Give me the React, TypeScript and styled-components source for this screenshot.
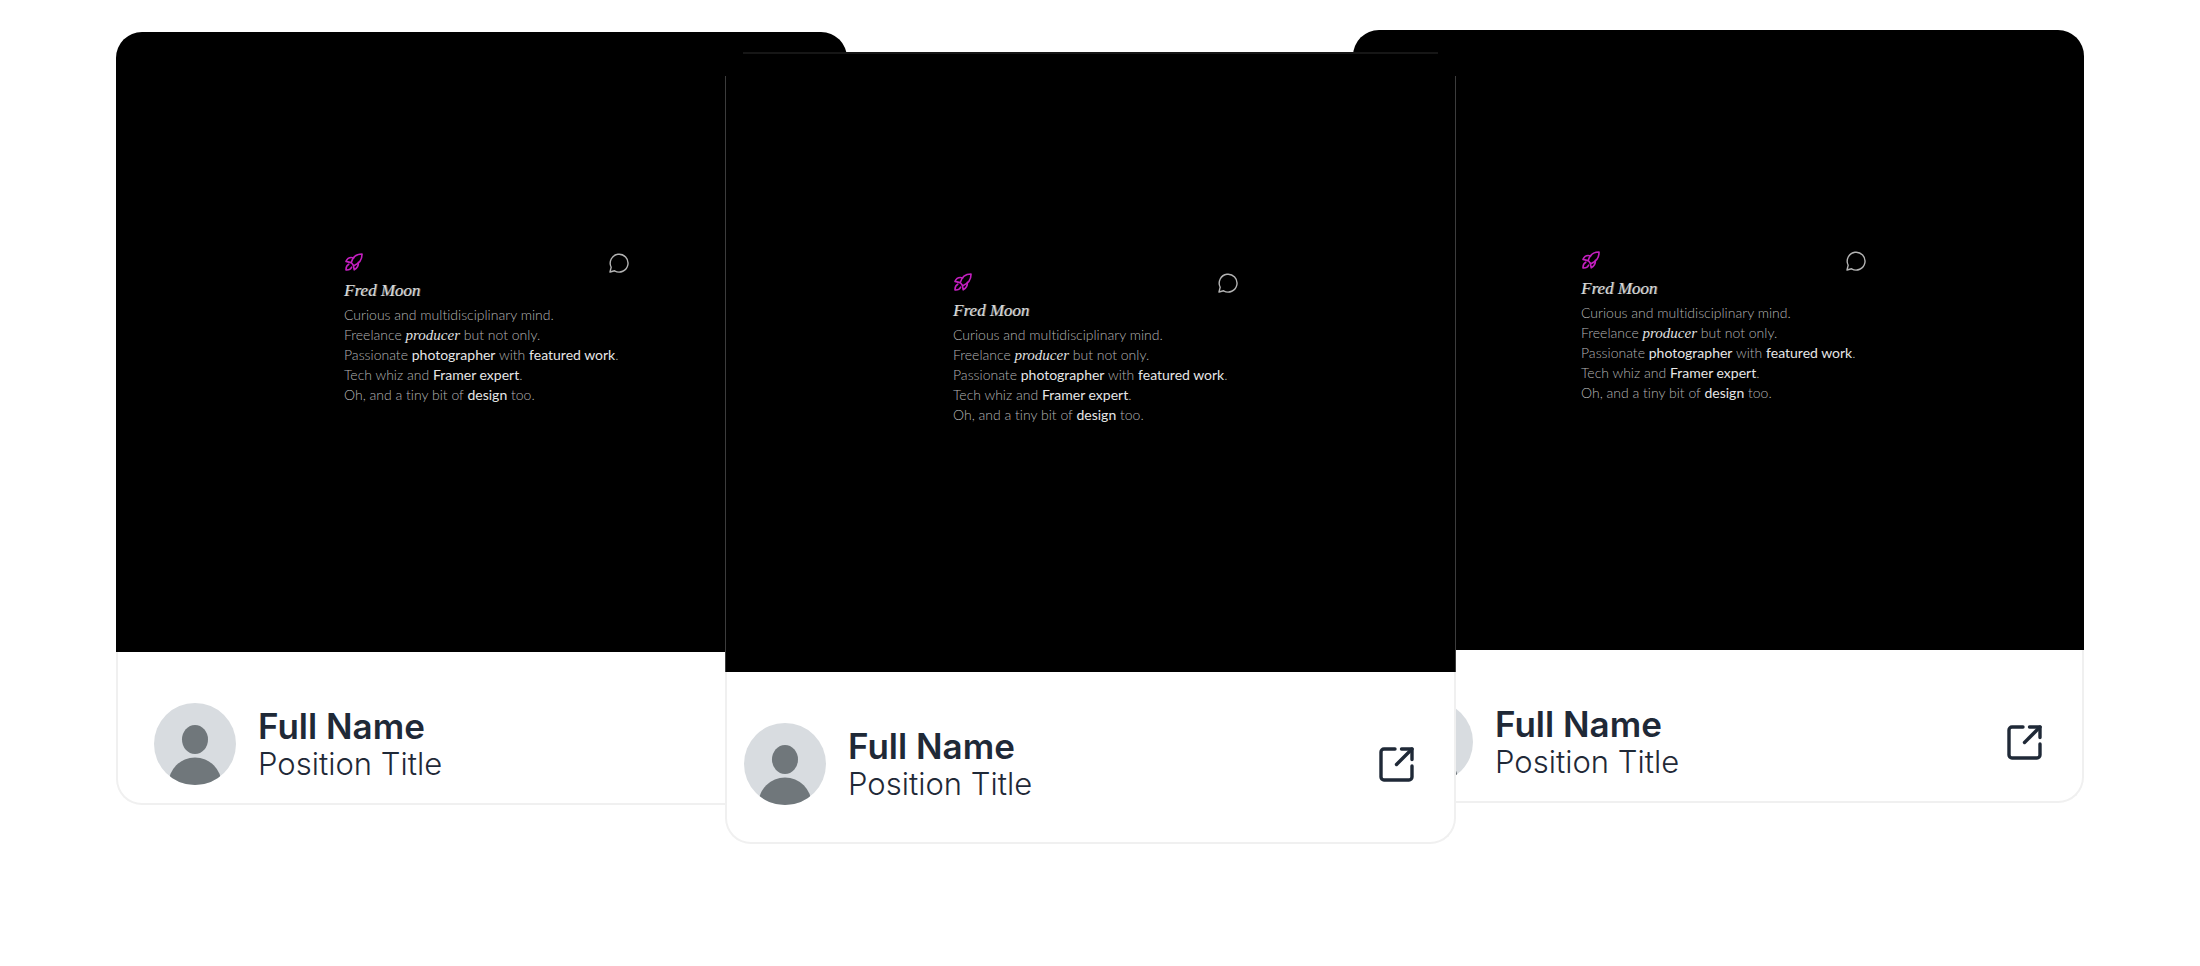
import React from "react";
import styled, { createGlobalStyle } from "styled-components";

const GlobalStyle = createGlobalStyle`
  *, *::before, *::after { box-sizing: border-box; }
  body {
    margin: 0;
    background: #fff;
    color: #1f2937;
    font-family: Inter, "Liberation Sans", sans-serif;
  }
`;

const Showcase = styled.main`
  display: flex;
  align-items: flex-start;
  padding: 0 116px;
`;

const Card = styled.article<{ $top: number; $overlap?: number; $raised?: boolean }>`
  position: relative;
  z-index: ${(p) => (p.$raised ? 1 : 0)};
  flex: 1 1 0;
  min-width: 0;
  margin-top: ${(p) => p.$top}px;
  margin-left: ${(p) => -(p.$overlap ?? 0)}px;
`;

const Preview = styled.div<{ $outlined?: boolean }>`
  position: relative;
  display: flex;
  justify-content: center;
  height: 620px;
  padding: 220px 0 0 10px;
  background: #000;
  border-radius: 26px 26px 0 0;

  &::before,
  &::after {
    content: "";
    display: ${(p) => (p.$outlined ? "block" : "none")};
    position: absolute;
    pointer-events: none;
  }
  &::before {
    inset: 0 18px auto;
    height: 2px;
    background: #161616;
  }
  &::after {
    inset: 24px 0 0;
    border: solid #3c3c3c;
    border-width: 0 1px;
  }
`;

const Profile = styled.section`
  width: 285px;
  color: #b4b4b4;
  font: 300 14px/20px Lato, "Open Sans", sans-serif;
  font-variant-ligatures: none;
`;

const ProfileBar = styled.div`
  display: flex;
  justify-content: space-between;
  align-items: center;
  height: 22px;
  padding-left: 1px;
`;

const RocketIcon = styled.svg`
  display: block;
  width: 18px;
  height: 18px;
  margin-bottom: 2px;
  color: #c41fc0;
`;

const BubbleIcon = styled.svg`
  display: block;
  width: 20px;
  height: 20px;
  color: #b4b4b4;
`;

const ProfileName = styled.h2`
  margin: 7px 0 4px;
  color: #dadada;
  font: italic 400 17px/20px "Liberation Serif", serif;
  text-shadow: 1px 0 #6a6a6a;
`;

const Line = styled.p`
  margin: 0;
  white-space: nowrap;
`;

const Strong = styled.strong`
  color: #e6e6e6;
  font-weight: 400;
`;

const Script = styled.em`
  color: #e0e0e0;
  font: italic 400 15px/18px "Liberation Serif", serif;
`;

const Footer = styled.footer<{ $inset: number; $bottom: number }>`
  display: flex;
  align-items: center;
  gap: 22px;
  padding: 51px 40px ${(p) => p.$bottom}px ${(p) => p.$inset}px;
  background: #fff;
  border: solid #f0f0f0;
  border-width: 0 2px 2px;
  border-radius: 0 0 26px 26px;
`;

const Avatar = styled.svg`
  flex: none;
  width: 82px;
  height: 82px;
`;

const Person = styled.div`
  flex: 1;
`;

const FullName = styled.h3`
  margin: 0;
  font-size: 35px;
  font-weight: 600;
  line-height: 40px;
`;

const Position = styled.p`
  margin: 0;
  font-size: 31px;
  font-weight: 350;
  line-height: 36px;
`;

const OpenLink = styled.a`
  display: block;
  color: #1f2937;
`;

const OpenIcon = styled.svg`
  display: block;
  width: 35px;
  height: 35px;
`;

type CardProps = {
  top: number;
  overlap?: number;
  raised?: boolean;
  inset: number;
  bottom: number;
};

function ProfileCard({ top, overlap, raised, inset, bottom }: CardProps) {
  return (
    <Card $top={top} $overlap={overlap} $raised={raised}>
      <Preview $outlined={raised}>
        <Profile>
          <ProfileBar>
            <RocketIcon viewBox="0 0 18 18" fill="none" stroke="currentColor" strokeWidth="1.6" strokeLinecap="round" strokeLinejoin="round" aria-hidden>
              <path d="M6.2 9.6C7.5 4.6 11.4 1 17 1c.2 5.4-2.6 9.6-8.2 11.7Z" />
              <path d="M8.6 4.9C5 3.8 2.4 5.2 1 8.4l4.9 1.2" />
              <path d="M13.4 9.3c.2 3.6-1.2 6-4.2 7.6L8.4 12.6" />
              <path d="M3.8 11.2C1.4 12.4.9 14.3 1 17c2.7.2 4.6-.5 5.6-2.8" />
            </RocketIcon>
            <BubbleIcon viewBox="0 0 20 20" fill="none" stroke="currentColor" strokeWidth="1.4" strokeLinejoin="round" aria-hidden>
              <path d="M1 19 L2.2 14.2 A8.9 8.9 0 1 1 5.6 17.8 Z" />
            </BubbleIcon>
          </ProfileBar>
          <ProfileName>Fred Moon</ProfileName>
          <Line>Curious and multidisciplinary mind.</Line>
          <Line>
            Freelance <Script>producer</Script> but not only.
          </Line>
          <Line>
            Passionate <Strong>photographer</Strong> with <Strong>featured work</Strong>.
          </Line>
          <Line>
            Tech whiz and <Strong>Framer expert</Strong>.
          </Line>
          <Line>
            Oh, and a tiny bit of <Strong>design</Strong> too.
          </Line>
        </Profile>
      </Preview>
      <Footer $inset={inset} $bottom={bottom}>
        <Avatar viewBox="0 0 82 82" aria-hidden>
          <defs>
            <clipPath id="avatar-disc">
              <circle cx="41" cy="41" r="41" />
            </clipPath>
          </defs>
          <g clipPath="url(#avatar-disc)">
            <rect width="82" height="82" fill="#d8dce0" />
            <ellipse cx="41" cy="36.5" rx="13" ry="14.5" fill="#70777b" />
            <circle cx="41" cy="81" r="26.5" fill="#70777b" />
          </g>
        </Avatar>
        <Person>
          <FullName>Full Name</FullName>
          <Position>Position Title</Position>
        </Person>
        <OpenLink href="#profile" aria-label="Open profile">
          <OpenIcon viewBox="0 0 35 35" fill="none" stroke="currentColor" strokeWidth="3.4" strokeLinecap="round" strokeLinejoin="round" aria-hidden>
            <path d="M16 2H5a3 3 0 0 0-3 3v25a3 3 0 0 0 3 3h25a3 3 0 0 0 3-3V19" />
            <path d="M22.5 2H33v10.5" />
            <path d="M33 2 17.5 17.5" />
          </OpenIcon>
        </OpenLink>
      </Footer>
    </Card>
  );
}

export default function App() {
  return (
    <>
      <GlobalStyle />
      <Showcase>
        <ProfileCard top={32} inset={36} bottom={18} />
        <ProfileCard top={52} overlap={122} inset={17} bottom={37} raised />
        <ProfileCard top={30} overlap={103} inset={36} bottom={18} />
      </Showcase>
    </>
  );
}
